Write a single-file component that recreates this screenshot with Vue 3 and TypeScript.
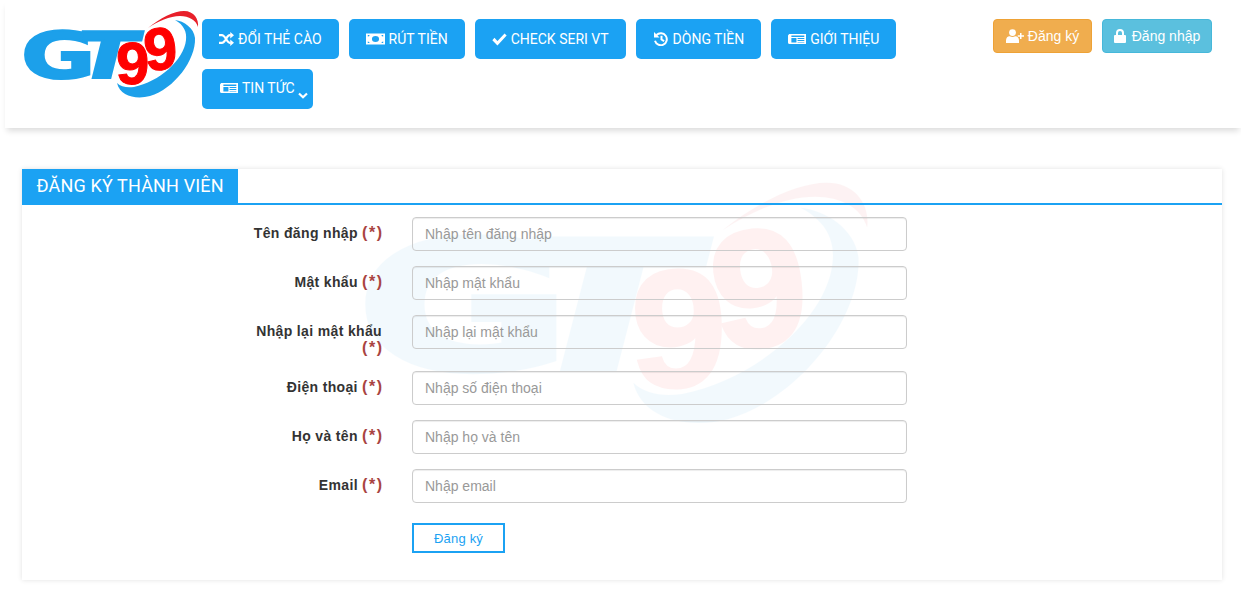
<script setup lang="ts">
interface NavItem { label: string; icon: string; caret?: boolean }
const nav: NavItem[] = [
  { label: 'ĐỔI THẺ CÀO', icon: 'shuffle' },
  { label: 'RÚT TIỀN', icon: 'money' },
  { label: 'CHECK SERI VT', icon: 'check' },
  { label: 'DÒNG TIỀN', icon: 'history' },
  { label: 'GIỚI THIỆU', icon: 'news' },
  { label: 'TIN TỨC', icon: 'news', caret: true },
]
const fields = [
  { label: 'Tên đăng nhập', ph: 'Nhập tên đăng nhập', type: 'text' },
  { label: 'Mật khẩu', ph: 'Nhập mật khẩu', type: 'password' },
  { label: 'Nhập lại mật khẩu', ph: 'Nhập lại mật khẩu', type: 'password' },
  { label: 'Điện thoại', ph: 'Nhập số điện thoại', type: 'text' },
  { label: 'Họ và tên', ph: 'Nhập họ và tên', type: 'text' },
  { label: 'Email', ph: 'Nhập email', type: 'text' },
]
</script>

<template>
  <div class="page">
    <svg class="defs" width="0" height="0" aria-hidden="true">
      <symbol id="gt-logo" viewBox="0 0 175 90" preserveAspectRatio="none" overflow="visible">
        <text class="gt" transform="translate(-3 68) scale(1.42 1)">G</text>
        <text class="gt" transform="translate(47 68) skewX(-14) scale(1.4 1)">T</text>
        <path fill="#1ca0ea" d="M93 73C96 86 112 90 126 86C150 79 172 50 171 28C170 18 160 11 151 10C160 15 163 22 162 30C160 50 135 72 110 77C103 78 97 77 93 73Z" />
        <path fill="#e8202a" d="M124 18C136 8 150 1 160 1C170 1 175 9 174 17C172 10 165 6 156 6C146 6 134 11 124 18Z" />
        <text class="nine" x="92" y="74">9</text>
        <text class="nine" transform="rotate(-6 135 60)" x="122" y="60">9</text>
      </symbol>
    </svg>

    <header class="top">
      <svg class="logo" role="img" aria-label="GT99"><use href="#gt-logo" /></svg>
      <nav class="menu">
        <a v-for="item in nav" :key="item.label" class="menu-btn" :class="{ caret: item.caret }">
          <svg class="ic" :class="'i-' + item.icon" viewBox="0 0 16 14" preserveAspectRatio="none" aria-hidden="true">
            <template v-if="item.icon === 'shuffle'">
              <path fill="none" stroke="#fff" stroke-width="2.2" d="M0 3.2h3c4 0 5 7.6 8.5 7.6h1M0 10.800h3c4 0 5-7.600 8.500-7.600h1" />
              <path fill="#fff" d="M12 0l4 3.200-4 3.200zM12 7.600l4 3.200-4 3.200z" />
            </template>
            <path v-else-if="item.icon === 'money'" fill="#fff" fill-rule="evenodd" d="M0 1.500h16v11H0zM8 4a3 3 0 1 0 0 6 3 3 0 0 0 0-6zM1.500 3v1.500a1.500 1.500 0 0 0 1.500-1.500zM13 3a1.500 1.500 0 0 0 1.500 1.500V3zM1.500 9.500V11h1.500a1.500 1.500 0 0 0-1.500-1.500zM14.500 9.500A1.500 1.500 0 0 0 13 11h1.500z" />
            <path v-else-if="item.icon === 'check'" fill="none" stroke="#fff" stroke-width="3.200" d="M1.500 7l4.300 4.300 8.700-8.800" />
            <template v-else-if="item.icon === 'history'">
              <path fill="none" stroke="#fff" stroke-width="2" d="M3.500 3a6 6 0 1 1-1.500 5.800M8.500 3.800v3.700l2.600 1.700" />
              <path fill="#fff" d="M1 0v5.500h5.500z" />
            </template>
            <path v-else fill="#fff" fill-rule="evenodd" d="M0 3.500L1 2h15v10H1.500A1.500 1.500 0 0 1 0 10.500zM3 3.500v1.500h11.500v-1.500zM3 6v4.500h4.500V6zM8.500 6v1h6v-1zM8.500 8v1h6v-1zM8.500 10v.500h6v-.500z" />
          </svg>
          <span>{{ item.label }}</span>
          <svg v-if="item.caret" class="chev" viewBox="0 0 10 7" aria-hidden="true">
            <path fill="none" stroke="#fff" stroke-width="2.200" d="M1 1.500l4 3.800 4-3.800" />
          </svg>
        </a>
      </nav>
      <div class="auth">
        <a class="auth-btn orange">
          <svg class="ic-user" viewBox="0 0 18 14" aria-hidden="true">
            <circle cx="6.500" cy="3.600" r="3.400" fill="#fff" />
            <path fill="#fff" d="M0 14v-2.500C0 8.500 2 7 3.800 7.200c1.600 1 3.800 1 5.400 0 1.800-.2 3.800 1.300 3.800 4.300V14z" />
            <path fill="#fff" d="M14 4h1.500v2.200H18v1.500h-2.500V10H14V7.700h-2.300V6.200H14z" />
          </svg>
          Đăng ký
        </a>
        <a class="auth-btn cyan">
          <svg class="ic-lock" viewBox="0 0 12 14" aria-hidden="true">
            <path fill="#fff" fill-rule="evenodd" d="M2 6V4a4 4 0 0 1 8 0v2h1a1 1 0 0 1 1 1v6a1 1 0 0 1-1 1H1a1 1 0 0 1-1-1V7a1 1 0 0 1 1-1zM4 6h4V4a2 2 0 0 0-4 0z" />
          </svg>
          Đăng nhập
        </a>
      </div>
    </header>

    <main class="panel">
      <svg class="watermark" aria-hidden="true"><use href="#gt-logo" /></svg>
      <div class="panel-head"><h1>ĐĂNG KÝ THÀNH VIÊN</h1></div>
      <form class="form" @submit.prevent>
        <div v-for="f in fields" :key="f.label" class="row">
          <label class="lbl">{{ f.label }} <span class="req">(*)</span></label>
          <input class="inp" :type="f.type" :placeholder="f.ph" />
        </div>
        <div class="row submit">
          <span></span>
          <button class="reg" type="submit">Đăng ký</button>
        </div>
      </form>
    </main>
  </div>
</template>

<style>
html, body { margin: 0; background: #fff; }
</style>

<style scoped>
.page { height: 610px; overflow: hidden; font-family: "Liberation Sans", Arial, sans-serif; color: #333; }
.defs { position: absolute; }
.top {
  margin-left: 5px; height: 128px; box-sizing: border-box; background: #fff;
  box-shadow: 0 5px 6px -2px rgba(0, 0, 0, .14); display: flex; align-items: flex-start; position: relative;
}
.logo { width: 175px; height: 90px; margin: 10px 3px 0 19px; flex: none; overflow: visible; }
.gt { font: 700 64px "DejaVu Sans", sans-serif; fill: #1ca0ea; stroke: #1ca0ea; stroke-width: 2px; }
.nine { font: 700 60px "Liberation Sans", sans-serif; fill: #f00; stroke: #f00; stroke-width: 1px; }
.menu { width: 710px; display: flex; flex-wrap: wrap; gap: 10px; padding-top: 19px; }
.menu-btn {
  height: 40px; box-sizing: border-box; padding: 0 17px; background: #1ba2f3; color: #fff; border-radius: 5px;
  display: flex; align-items: center; gap: 4px; font: 400 14px Roboto, sans-serif; white-space: nowrap; position: relative;
}
.menu-btn.caret { padding: 0 18px 2px 18px; }
.ic { width: 16px; height: 14px; flex: none; }
.ic.i-shuffle { width: 15px; }
.ic.i-money { width: 19px; }
.ic.i-check { width: 15px; }
.ic.i-news { width: 18px; }
.chev { position: absolute; right: 5px; top: 23px; width: 10px; height: 7px; }
.auth { margin-left: auto; margin-right: 29px; padding-top: 19px; display: flex; gap: 10px; }
.auth-btn {
  height: 34px; box-sizing: border-box; border: 1px solid; border-radius: 4px; color: #fff; font-size: 14px;
  display: flex; align-items: center; gap: 4px; justify-content: center;
}
.orange { width: 99px; background: #f0ad4e; border-color: #eea236; }
.cyan { width: 110px; background: #5bc0de; border-color: #46b8da; }
.ic-user { width: 18px; height: 14px; }
.ic-lock { width: 12px; height: 14px; margin-right: 2px; }
.panel {
  margin: 41px 19px 0 22px; background: #fff; box-shadow: 0 0 5px rgba(0, 0, 0, .12); position: relative;
}
.watermark { position: absolute; left: 343px; top: 11px; width: 505px; height: 250px; opacity: .05; overflow: visible; }
.panel-head { border-bottom: 2px solid #1ba2f3; position: relative; }
.panel-head h1 {
  margin: 0; width: 216px; height: 34px; box-sizing: border-box; padding-left: 14.500px; background: #1ba2f3; color: #fff;
  font: 400 18px/34px Roboto, sans-serif; letter-spacing: .15px; white-space: nowrap;
}
.form { position: relative; padding: 12px 0 27px 227px; display: flex; flex-direction: column; gap: 15px; }
.row { display: grid; grid-template-columns: 133px 495px; column-gap: 30px; }
.lbl { text-align: right; font-size: 14px; font-weight: 700; line-height: 16.500px; padding-top: 8px; letter-spacing: .35px; }
.req { color: #a94442; font-size: 16px; letter-spacing: 1.500px; margin-right: -1.500px; line-height: 16px; }
.inp {
  height: 34px; box-sizing: border-box; padding: 0 12px; border: 1px solid #ccc; border-radius: 4px; background: transparent;
  font: 14px "Liberation Sans", sans-serif; color: #555; outline: none; box-shadow: inset 0 1px 1px rgba(0, 0, 0, .075);
}
.inp::placeholder { color: #999; opacity: 1; }
.submit { margin-top: 5px; }
.reg {
  width: 93px; height: 30px; box-sizing: border-box; border: 2px solid #1ba2f3; background: #fff; color: #1ba2f3;
  font: 13px "Liberation Sans", sans-serif; letter-spacing: .2px; padding: 0;
}
</style>
